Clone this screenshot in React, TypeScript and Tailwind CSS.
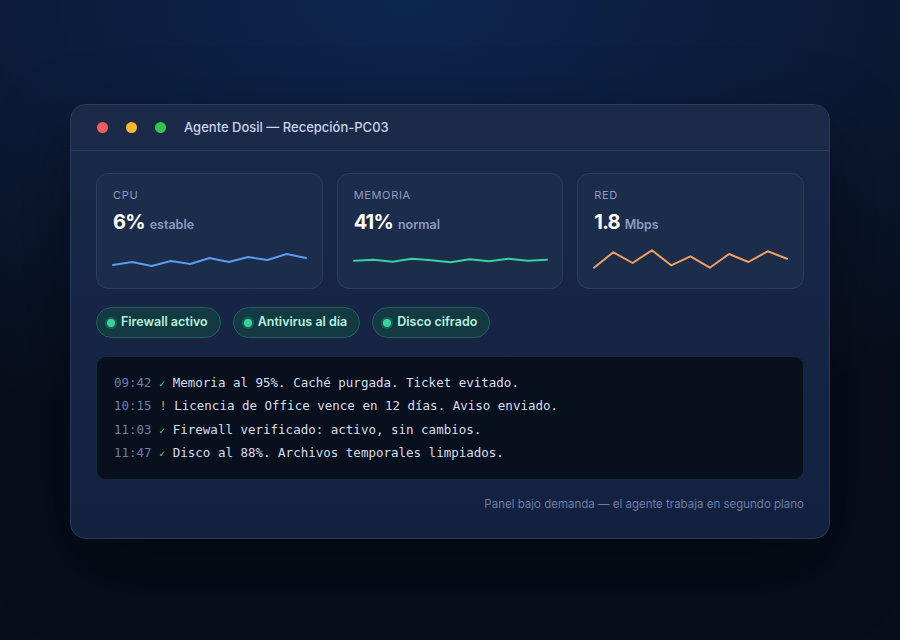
type Metric = {
  label: string;
  value: string;
  unit: string;
  color: string;
  points: number[];
};

const metrics: Metric[] = [
  {
    label: "CPU",
    value: "6%",
    unit: "estable",
    color: "#5b9cf0",
    points: [17, 14, 18, 13, 16, 10, 14, 9, 12, 6, 10],
  },
  {
    label: "MEMORIA",
    value: "41%",
    unit: "normal",
    color: "#34d3a0",
    points: [12.7, 11.7, 13.7, 10.7, 12.3, 14.3, 11.3, 13.3, 10.7, 12.7, 11.7],
  },
  {
    label: "RED",
    value: "1.8",
    unit: "Mbps",
    color: "#f0a060",
    points: [19.7, 4.3, 15, 2.3, 17.3, 8.3, 19.7, 6, 14, 3.3, 10.7],
  },
];

const checks = ["Firewall activo", "Antivirus al día", "Disco cifrado"];

type LogLine = { time: string; mark: "ok" | "warn"; text: string };

const logs: LogLine[] = [
  { time: "09:42", mark: "ok", text: "Memoria al 95%. Caché purgada. Ticket evitado." },
  { time: "10:15", mark: "warn", text: "Licencia de Office vence en 12 días. Aviso enviado." },
  { time: "11:03", mark: "ok", text: "Firewall verificado: activo, sin cambios." },
  { time: "11:47", mark: "ok", text: "Disco al 88%. Archivos temporales limpiados." },
];

function Spark({ points, color }: { points: number[]; color: string }) {
  const step = 193 / (points.length - 1);
  const d = points.map((y, i) => `${(i * step).toFixed(1)},${y}`).join(" ");
  return (
    <svg width="193" height="24" viewBox="0 0 193 24" className="block overflow-visible">
      <polyline
        points={d}
        fill="none"
        stroke={color}
        strokeWidth={2}
        strokeLinejoin="round"
        strokeLinecap="round"
      />
    </svg>
  );
}

export default function App() {
  return (
    <div className="w-[900px] h-[640px] flex items-start justify-center pt-[104px] bg-[radial-gradient(ellipse_90%_70%_at_45%_0%,#0d2650_0%,#0b1a36_55%,#070e1b_100%)] font-['Inter','Noto_Sans',sans-serif]">
      <div className="w-[760px] rounded-[16px] border border-[#2a3a5a] bg-[linear-gradient(180deg,#19294a_0%,#13213f_100%)] shadow-[0_30px_80px_rgba(0,0,0,0.45)] overflow-hidden">
        <div className="h-[46px] flex items-center px-[26px] border-b border-[#2a3a58] bg-[#1b2a48]">
          <span className="w-[11px] h-[11px] rounded-full bg-[#f25c5c]" />
          <span className="w-[11px] h-[11px] rounded-full bg-[#f5b82e] ml-[18px]" />
          <span className="w-[11px] h-[11px] rounded-full bg-[#2bc84a] ml-[18px]" />
          <span className="ml-[18px] text-[13px] font-medium text-[#c9d4ea]">
            Agente Dosil — Recepción-PC03
          </span>
        </div>

        <div className="px-[25px] pt-[22px] pb-[26px]">
          <div className="grid grid-cols-3 gap-[14px]">
            {metrics.map((m) => (
              <div
                key={m.label}
                className="h-[116px] rounded-[12px] border border-[#2c3c5a] bg-[#1c2c4b] px-[16px] pt-[14px]"
              >
                <div className="text-[11px] leading-[14px] tracking-[0.06em] text-[#8e9cba]">
                  {m.label}
                </div>
                <div className="mt-[7px] h-[26px] flex items-baseline gap-[5px]">
                  <span className="text-[20px] leading-[26px] font-bold tracking-[-0.04em] text-white">
                    {m.value}
                  </span>
                  <span className="text-[12.5px] font-semibold text-[#8a9cc2]">{m.unit}</span>
                </div>
                <div className="mt-[13px]">
                  <Spark points={m.points} color={m.color} />
                </div>
              </div>
            ))}
          </div>

          <div className="mt-[18px] flex gap-[12px]">
            {checks.map((c) => (
              <div
                key={c}
                className="h-[31px] flex items-center gap-[6px] pl-[10px] pr-[12px] rounded-full border border-[#22605c] bg-[#133a42] text-[12.5px] font-semibold text-[#b4f2dc]"
              >
                <span className="w-[8px] h-[8px] rounded-full bg-[#34d399] shadow-[0_0_0_2px_rgba(52,211,153,0.25)]" />
                {c}
              </div>
            ))}
          </div>

          <div className="mt-[18px] h-[124px] rounded-[10px] border border-[#1a2740] bg-[#080f1d] pl-[17px] pt-[14px] font-['DejaVu_Sans_Mono','Liberation_Mono',monospace] text-[12.5px] leading-[23.3px]">
            {logs.map((l) => (
              <div key={l.time} className="whitespace-pre h-[23.3px]">
                <span className="text-[#6b7fa8]">{l.time}</span>{" "}
                {l.mark === "ok" ? (
                  <span className="text-[#34d399] text-[10px]">✓</span>
                ) : (
                  <span className="text-[#f0894a]">!</span>
                )}{" "}
                <span className="text-[#d6deec]">{l.text}</span>
              </div>
            ))}
          </div>

          <div className="mt-[16px] text-right text-[11.5px] leading-[16px] text-[#6a7ea8]">
            Panel bajo demanda — el agente trabaja en segundo plano
          </div>
        </div>
      </div>
    </div>
  );
}
